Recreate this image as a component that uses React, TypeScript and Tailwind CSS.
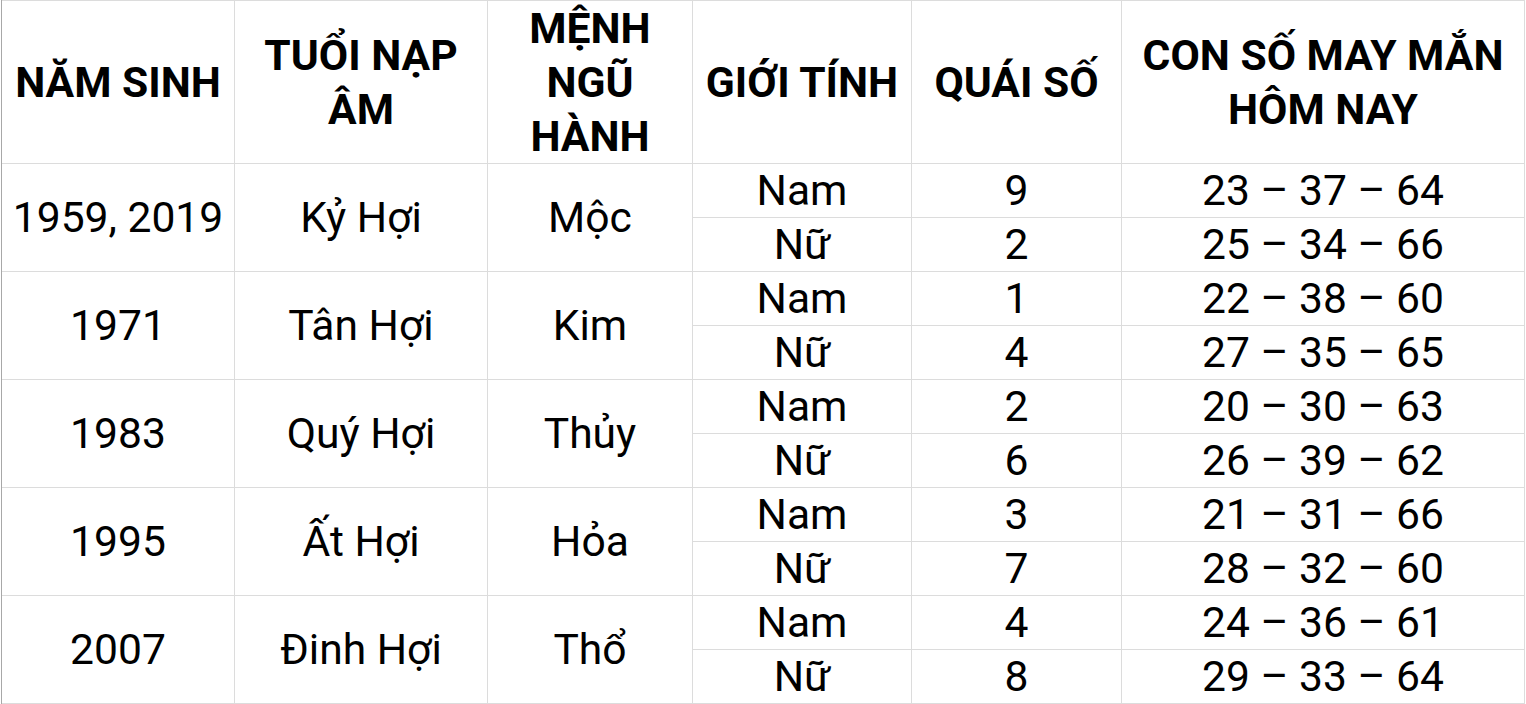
import React from "react";

const groups = [
  { year: "1959, 2019", tuoi: "Kỷ Hợi", menh: "Mộc", rows: [["Nam", "9", "23 – 37 – 64"], ["Nữ", "2", "25 – 34 – 66"]] },
  { year: "1971", tuoi: "Tân Hợi", menh: "Kim", rows: [["Nam", "1", "22 – 38 – 60"], ["Nữ", "4", "27 – 35 – 65"]] },
  { year: "1983", tuoi: "Quý Hợi", menh: "Thủy", rows: [["Nam", "2", "20 – 30 – 63"], ["Nữ", "6", "26 – 39 – 62"]] },
  { year: "1995", tuoi: "Ất Hợi", menh: "Hỏa", rows: [["Nam", "3", "21 – 31 – 66"], ["Nữ", "7", "28 – 32 – 60"]] },
  { year: "2007", tuoi: "Đinh Hợi", menh: "Thổ", rows: [["Nam", "4", "24 – 36 – 61"], ["Nữ", "8", "29 – 33 – 64"]] },
];

const headers = ["NĂM SINH", "TUỔI NẠP ÂM", "MỆNH NGŨ HÀNH", "GIỚI TÍNH", "QUÁI SỐ", "CON SỐ MAY MẮN HÔM NAY"];

const cell = "bg-white flex items-center justify-center text-center text-black text-[42.6px]";

export default function App() {
  return (
    <div className="w-[1526px] h-[704px] bg-white flex overflow-hidden font-['Roboto','Noto_Sans',sans-serif]">
      <div className="w-px shrink-0 bg-white" />
      <div className="w-px shrink-0 bg-[#a8a8a8]" />
      <div className="grid grid-cols-[232px_252px_204px_218px_209px_402px] grid-rows-[162px_repeat(10,53px)] gap-px bg-[#dcdcdc] py-px pr-px h-[704px]">
        {headers.map((h) => (
          <div key={h} className={`${cell} font-bold leading-[54px] px-1`}>
            {h}
          </div>
        ))}
        {groups.map((g) => (
          <React.Fragment key={g.year}>
            <div className={`${cell} row-span-2`}>{g.year}</div>
            <div className={`${cell} row-span-2`}>{g.tuoi}</div>
            <div className={`${cell} row-span-2`}>{g.menh}</div>
            {g.rows.map((r, ri) => (
              <React.Fragment key={ri}>
                {r.map((v, ci) => (
                  <div key={ci} className={`${cell} leading-none`}>
                    {v}
                  </div>
                ))}
              </React.Fragment>
            ))}
          </React.Fragment>
        ))}
      </div>
    </div>
  );
}
